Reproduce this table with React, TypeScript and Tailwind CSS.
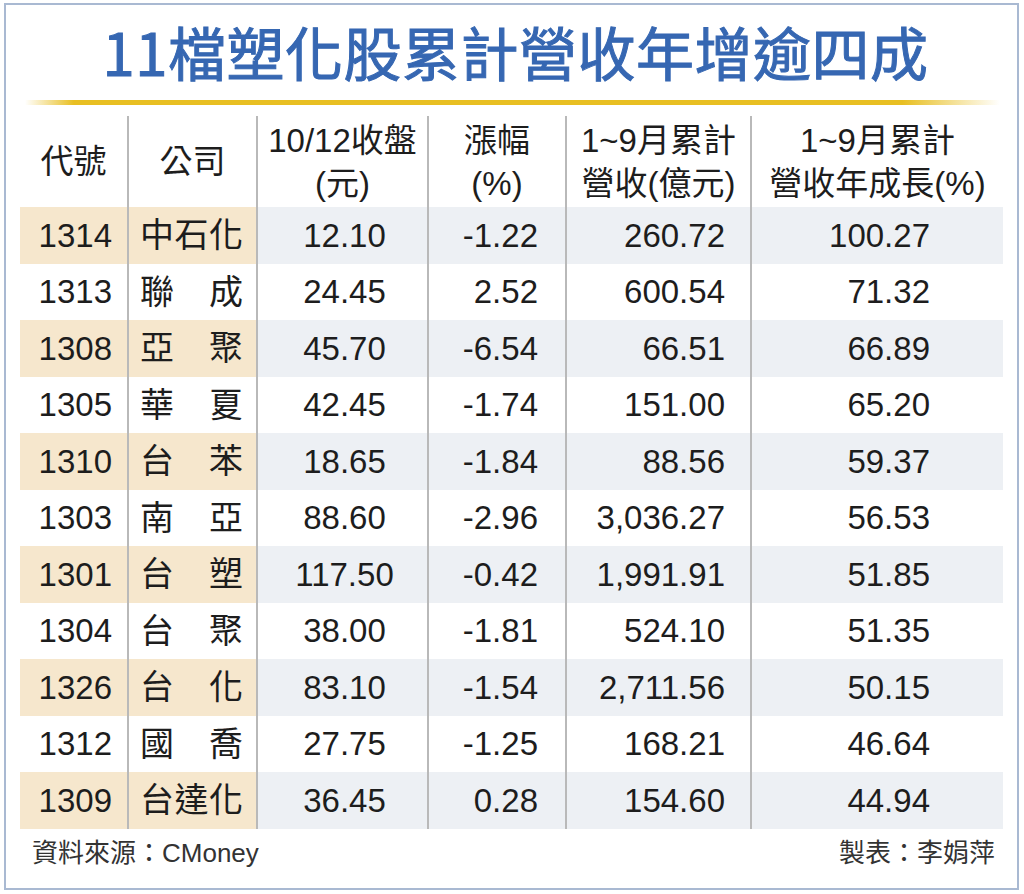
const rows = [
  ["1314", "中石化", "12.10", "-1.22", "260.72", "100.27"],
  ["1313", "聯成", "24.45", "2.52", "600.54", "71.32"],
  ["1308", "亞聚", "45.70", "-6.54", "66.51", "66.89"],
  ["1305", "華夏", "42.45", "-1.74", "151.00", "65.20"],
  ["1310", "台苯", "18.65", "-1.84", "88.56", "59.37"],
  ["1303", "南亞", "88.60", "-2.96", "3,036.27", "56.53"],
  ["1301", "台塑", "117.50", "-0.42", "1,991.91", "51.85"],
  ["1304", "台聚", "38.00", "-1.81", "524.10", "51.35"],
  ["1326", "台化", "83.10", "-1.54", "2,711.56", "50.15"],
  ["1312", "國喬", "27.75", "-1.25", "168.21", "46.64"],
  ["1309", "台達化", "36.45", "0.28", "154.60", "44.94"],
];

const font = "font-['Liberation_Sans','Noto_Sans_CJK_TC',sans-serif]";
const grid = "grid grid-cols-[107px_129px_171px_138px_185px_253px]";
const divider = "border-l-2 border-[#b9b9b9]";

export default function App() {
  return (
    <div className={`w-[1024px] h-[894px] bg-white pt-[3px] pl-[4px] pr-[5px] pb-[4px] ${font}`}>
      <div className="h-full border-2 border-[#a9b9d2] flex flex-col">
        {/* Title */}
        <div className="h-[95px] flex items-center justify-center pb-[4px] pl-[8px]">
          <h1 className="text-[58px] leading-none font-normal text-[#3667b2] [-webkit-text-stroke:1px_#3667b2] font-['Noto_Sans_CJK_TC',sans-serif] tracking-[0.5px]">
            11檔塑化股累計營收年增逾四成
          </h1>
        </div>
        <div className="ml-[19px] mr-[17px] h-[5px] bg-[linear-gradient(to_right,rgba(236,196,40,0),#e8bf22_5%,#e8bf22_90%,rgba(236,196,40,0))]" />

        {/* Table */}
        <div className="ml-[14px] w-[983px] text-[#1d1d1d]">
          <div className={`${grid} h-[99px] mt-[3px] text-[33px] leading-[43px] pt-[8px]`}>
            <div className="flex items-center justify-center">代號</div>
            <div className={`flex items-center justify-center ${divider}`}>公司</div>
            <div className={`flex flex-col items-center justify-center ${divider}`}>
              <span>10/12收盤</span>
              <span>(元)</span>
            </div>
            <div className={`flex flex-col items-center justify-center ${divider}`}>
              <span>漲幅</span>
              <span>(%)</span>
            </div>
            <div className={`flex flex-col items-center justify-center ${divider}`}>
              <span>1~9月累計</span>
              <span>營收(億元)</span>
            </div>
            <div className={`flex flex-col items-center justify-center ${divider}`}>
              <span>1~9月累計</span>
              <span>營收年成長(%)</span>
            </div>
          </div>

          {rows.map((r, i) => {
            const striped = i % 2 === 0;
            const tan = striped ? "bg-[#f6e7cd]" : "";
            const gray = striped ? "bg-[#edf0f4]" : "";
            return (
              <div key={r[0]} className={`${grid} h-[56.5px] text-[33px] leading-none`}>
                <div className={`flex items-center justify-end pr-[15px] ${tan}`}>{r[0]}</div>
                <div className={`flex items-center ${divider} ${tan}`}>
                  <div className="ml-[11px] w-[103px] flex justify-between text-[34px]">
                    {r[1].split("").map((c, j) => (
                      <span key={j}>{c}</span>
                    ))}
                  </div>
                </div>
                <div className={`flex items-center justify-center pl-[4px] ${divider} ${gray}`}>{r[2]}</div>
                <div className={`flex items-center justify-end pr-[27px] ${divider} ${gray}`}>{r[3]}</div>
                <div className={`flex items-center justify-end pr-[25px] ${divider} ${gray}`}>{r[4]}</div>
                <div className={`flex items-center justify-end pr-[73px] ${divider} ${gray}`}>{r[5]}</div>
              </div>
            );
          })}
        </div>

        {/* Footer */}
        <div className="flex justify-between items-center pl-[26px] pr-[22px] pt-[9px] text-[26px] leading-[30px] text-[#333]">
          <span>資料來源：CMoney</span>
          <span>製表：李娟萍</span>
        </div>
      </div>
    </div>
  );
}
